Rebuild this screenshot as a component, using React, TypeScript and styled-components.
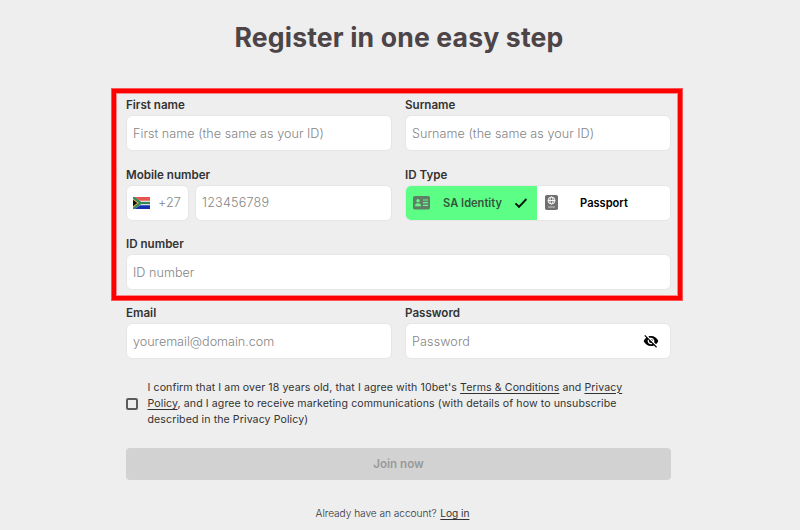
import React from "react";
import styled, { createGlobalStyle } from "styled-components";
import { MdVisibilityOff } from "react-icons/md";

const GlobalStyle = createGlobalStyle`
  *, *::before, *::after { box-sizing: border-box; }
  body { margin: 0; background: #eeeeee; font-family: Inter, "Liberation Sans", sans-serif; }
`;

const Page = styled.main`
  width: 800px;
  height: 530px;
  overflow: hidden;
  display: flex;
  flex-direction: column;
  background: #eeeeee;
  color: #333333;
`;

const Title = styled.h1`
  margin: 19px 0 0 -2px;
  height: 36px;
  line-height: 36px;
  text-align: center;
  font-size: 26.6px;
  letter-spacing: 0.15px;
  font-weight: 700;
  color: #4d4447;
  white-space: nowrap;
`;

const Highlight = styled.section`
  margin: 33px 0 0 111px;
  width: 572px;
  height: 213px;
  border: 1px solid #fb5555;
  box-shadow: inset 0 0 0 4px #fd0000, inset 0 0 0 5px #f68a8a;
  padding: 9px 11px 0 14px;
  display: flex;
  flex-direction: column;
  gap: 16.5px;
`;

const Row = styled.div`
  display: grid;
  grid-template-columns: 266px 266px;
  column-gap: 13px;
`;

const Lower = styled.section`
  margin: 5px 0 0 126px;
  width: 545px;
`;

const Field = styled.div`
  min-width: 0;
`;

const Label = styled.label`
  display: block;
  height: 17px;
  line-height: 14px;
  font-size: 11.6px;
  font-weight: 600;
  color: #333333;
  white-space: nowrap;
`;

const Control = styled.div<{ $w?: number }>`
  width: ${(p) => (p.$w ? `${p.$w}px` : "100%")};
  height: 36px;
  border: 1px solid #e6e6e6;
  border-radius: 6px;
  background: #ffffff;
  display: flex;
  align-items: center;
  overflow: hidden;
  padding: 0 6px;
`;

const Input = styled.input<{ $ls?: number }>`
  flex: 1;
  min-width: 0;
  border: 0;
  padding: 0;
  outline: none;
  background: transparent;
  font: 300 12.6px Inter, sans-serif;
  letter-spacing: ${(p) => p.$ls ?? 0.03}px;
  &::placeholder { color: #858585; opacity: 1; }
`;

const PhoneRow = styled.div`
  display: flex;
  gap: 6px;
`;

const DialCode = styled.span`
  margin-left: 8px;
  font-size: 12.6px;
  font-weight: 300;
  letter-spacing: 0.1px;
  color: #858585;
`;

const Segments = styled(Control)`
  padding: 0;
`;

const Segment = styled.button<{ $active?: boolean }>`
  flex: none;
  width: ${(p) => (p.$active ? 131 : 133)}px;
  height: 100%;
  border: 0;
  padding: 0 9px 0 ${(p) => (p.$active ? 7 : 8)}px;
  display: grid;
  grid-template-columns: 18px 1fr ${(p) => (p.$active ? 14 : 16)}px;
  align-items: center;
  background: ${(p) => (p.$active ? "#5dfe86" : "#ffffff")};
  color: ${(p) => (p.$active ? "#34563d" : "#000000")};
  font: 600 11.1px Inter, sans-serif;
  text-align: center;
  white-space: nowrap;
`;

const Eye = styled(MdVisibilityOff)`
  width: 16px;
  height: 16px;
  margin-right: 5px;
  color: #000000;
`;

const Consent = styled.div`
  display: grid;
  grid-template-columns: 12px 1fr;
  column-gap: 9.5px;
  align-items: center;
  margin-top: 20.5px;
`;

const Checkbox = styled.span`
  width: 12px;
  height: 12px;
  border: 2px solid #5c5c5c;
  border-radius: 2px;
`;

const ConsentText = styled.div`
  font-size: 10.6px;
  line-height: 16.3px;
  white-space: nowrap;
`;

const ConsentLine = styled.div<{ $ls?: number }>`
  letter-spacing: ${(p) => p.$ls ?? 0.09}px;
`;

const Link = styled.a`
  color: inherit;
  text-decoration: underline;
  text-underline-offset: 1.5px;
`;

const Join = styled.button`
  margin: 19.6px 0 0;
  width: 545px;
  height: 32px;
  border: 0;
  border-radius: 4px;
  background: #d2d2d2;
  color: #999999;
  font: 600 11.6px Inter, sans-serif;
  display: block;
`;

const Footer = styled.p`
  margin: 25px 0 0;
  width: 533px;
  text-align: center;
  font-size: 10.2px;
  font-weight: 300;
  letter-spacing: -0.06px;
  line-height: 16px;
  white-space: nowrap;
`;

const LoginLink = styled(Link)`
  margin-left: 1px;
  font-weight: 400;
`;

const Flag = () => (
  <svg width="17" height="12" viewBox="0 0 17 12">
    <rect width="17" height="12" fill="#fff" />
    <path d="M0 0h17v3.8H7L1.5 0z" fill="#e65550" />
    <path d="M0 12h17V8.2H7L1.5 12z" fill="#1530b0" />
    <path d="M0 0h1.8L8 4.8h9v2.4H8L1.8 12H0z" fill="#35865b" />
    <path d="M0 1.5 5.8 6 0 10.5z" fill="#e9b84a" />
    <path d="M0 2.7 4.3 6 0 9.3z" fill="#111" />
  </svg>
);

const IdCard = () => (
  <svg width="17" height="14" viewBox="0 0 17 14">
    <rect width="17" height="13.5" rx="1.8" fill="#5f7f67" />
    <g fill="#6af58c">
      <circle cx="5" cy="4.7" r="1.7" />
      <path d="M2 10.2c0-2 1.2-2.9 3-2.9s3 .9 3 2.9z" />
      <path d="M10 3.4h5v1.2h-5zM10 6.1h5v1.2h-5zM10 8.8h5V10h-5z" />
    </g>
  </svg>
);

const Check = () => (
  <svg width="14" height="12" viewBox="0 0 14 12">
    <path d="M1.4 6.4 5 9.8 12.4 2" fill="none" stroke="#06180a" strokeWidth="1.9" />
  </svg>
);

const PassportIcon = () => (
  <svg width="13" height="15" viewBox="0 0 13 15">
    <rect width="13" height="15" rx="1.8" fill="#707070" />
    <g fill="none" stroke="#fff" strokeWidth=".9">
      <circle cx="6.5" cy="5.5" r="3.5" />
      <ellipse cx="6.5" cy="5.5" rx="1.6" ry="3.5" />
      <path d="M3 5.5h7" />
      <path d="M3 12h7" strokeOpacity=".7" />
    </g>
  </svg>
);

type TextFieldProps = { label: string; placeholder: string; ls?: number; children?: React.ReactNode };

const TextField = ({ label, placeholder, ls, children }: TextFieldProps) => (
  <Field>
    <Label>{label}</Label>
    <Control>
      <Input placeholder={placeholder} $ls={ls} />
      {children}
    </Control>
  </Field>
);

export default function App() {
  return (
    <Page>
      <GlobalStyle />
      <Title>Register in one easy step</Title>
      <Highlight>
        <Row>
          <TextField label="First name" placeholder="First name (the same as your ID)" />
          <TextField label="Surname" placeholder="Surname (the same as your ID)" />
        </Row>
        <Row>
          <Field>
            <Label>Mobile number</Label>
            <PhoneRow>
              <Control $w={63}>
                <Flag />
                <DialCode>+27</DialCode>
              </Control>
              <Control $w={197}>
                <Input placeholder="123456789" $ls={0.2} />
              </Control>
            </PhoneRow>
          </Field>
          <Field>
            <Label>ID Type</Label>
            <Segments>
              <Segment $active>
                <IdCard />
                <span>SA Identity</span>
                <Check />
              </Segment>
              <Segment>
                <PassportIcon />
                <span>Passport</span>
              </Segment>
            </Segments>
          </Field>
        </Row>
        <TextField label="ID number" placeholder="ID number" />
      </Highlight>
      <Lower>
        <Row>
          <TextField label="Email" placeholder="youremail@domain.com" ls={-0.02} />
          <TextField label="Password" placeholder="Password" ls={0.1} >
            <Eye />
          </TextField>
        </Row>
        <Consent>
          <Checkbox />
          <ConsentText>
            <ConsentLine>
              I confirm that I am over 18 years old, that I agree with 10bet's <Link>Terms &amp; Conditions</Link> and <Link>Privacy</Link>
            </ConsentLine>
            <ConsentLine>
              <Link>Policy</Link>, and I agree to receive marketing communications (with details of how to unsubscribe
            </ConsentLine>
            <ConsentLine>described in the Privacy Policy)</ConsentLine>
          </ConsentText>
        </Consent>
        <Join>Join now</Join>
        <Footer>
          Already have an account? <LoginLink>Log in</LoginLink>
        </Footer>
      </Lower>
    </Page>
  );
}
